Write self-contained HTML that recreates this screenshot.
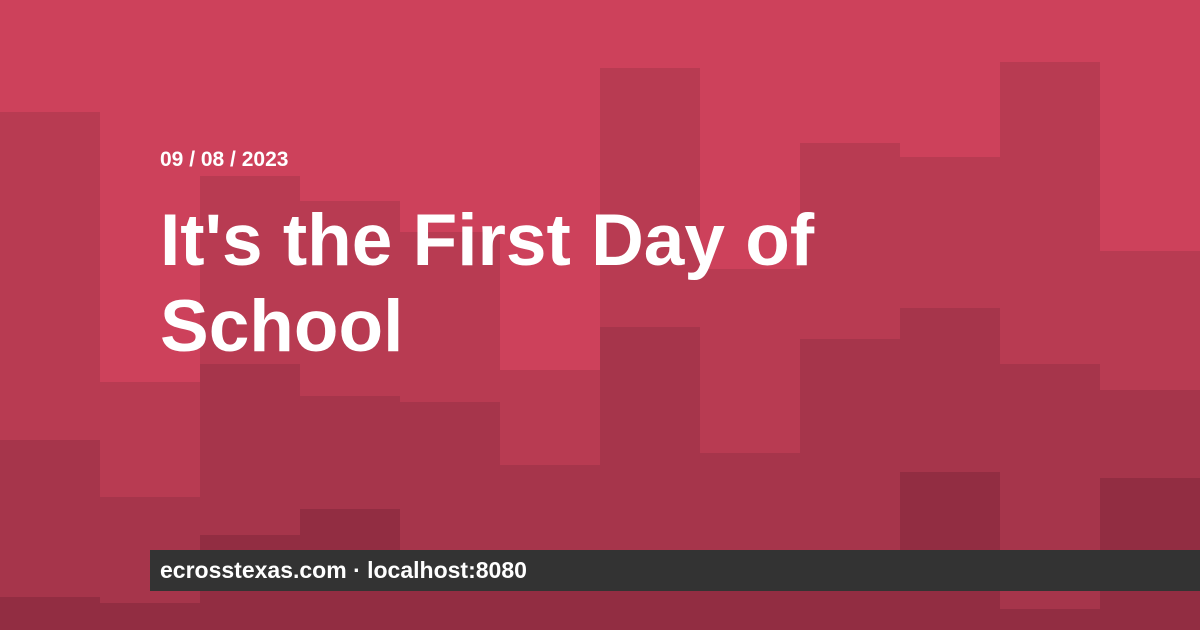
<!DOCTYPE html>
<html><head><meta charset="utf-8"><style>
html,body{margin:0;padding:0}
body{width:1200px;height:630px;position:relative;overflow:hidden;background:#CD415B;font-family:"Liberation Sans",Arial,sans-serif}
.t{position:absolute;color:#fff;font-weight:bold;left:160px;white-space:nowrap}
</style></head><body>
<svg width="1200" height="630" style="position:absolute;left:0;top:0">
<rect x="0" y="112" width="100" height="518" fill="#B83B52"/><rect x="0" y="440" width="100" height="190" fill="#A6354B"/><rect x="0" y="597" width="100" height="33" fill="#922D42"/>
<rect x="100" y="382" width="100" height="248" fill="#B83B52"/><rect x="100" y="497" width="100" height="133" fill="#A6354B"/><rect x="100" y="603" width="100" height="27" fill="#922D42"/>
<rect x="200" y="176" width="100" height="454" fill="#B83B52"/><rect x="200" y="364" width="100" height="266" fill="#A6354B"/><rect x="200" y="535" width="100" height="95" fill="#922D42"/>
<rect x="300" y="201" width="100" height="429" fill="#B83B52"/><rect x="300" y="396" width="100" height="234" fill="#A6354B"/><rect x="300" y="509" width="100" height="121" fill="#922D42"/>
<rect x="400" y="232" width="100" height="398" fill="#B83B52"/><rect x="400" y="402" width="100" height="228" fill="#A6354B"/><rect x="400" y="590" width="100" height="40" fill="#922D42"/>
<rect x="500" y="370" width="100" height="260" fill="#B83B52"/><rect x="500" y="465" width="100" height="165" fill="#A6354B"/><rect x="500" y="590" width="100" height="40" fill="#922D42"/>
<rect x="600" y="68" width="100" height="562" fill="#B83B52"/><rect x="600" y="327" width="100" height="303" fill="#A6354B"/><rect x="600" y="590" width="100" height="40" fill="#922D42"/>
<rect x="700" y="269" width="100" height="361" fill="#B83B52"/><rect x="700" y="453" width="100" height="177" fill="#A6354B"/><rect x="700" y="590" width="100" height="40" fill="#922D42"/>
<rect x="800" y="143" width="100" height="487" fill="#B83B52"/><rect x="800" y="339" width="100" height="291" fill="#A6354B"/><rect x="800" y="590" width="100" height="40" fill="#922D42"/>
<rect x="900" y="157" width="100" height="473" fill="#B83B52"/><rect x="900" y="308" width="100" height="322" fill="#A6354B"/><rect x="900" y="472" width="100" height="158" fill="#922D42"/>
<rect x="1000" y="62" width="100" height="568" fill="#B83B52"/><rect x="1000" y="364" width="100" height="266" fill="#A6354B"/><rect x="1000" y="609" width="100" height="21" fill="#922D42"/>
<rect x="1100" y="251" width="100" height="379" fill="#B83B52"/><rect x="1100" y="390" width="100" height="240" fill="#A6354B"/><rect x="1100" y="478" width="100" height="152" fill="#922D42"/>
<rect x="150" y="550" width="1050" height="41" fill="#333333"/>
</svg>
<div class="t" style="top:147px;font-size:21px;line-height:26px">09 / 08 / 2023</div>
<div class="t" style="top:198px;font-size:73px;line-height:86px">It's the First Day of<br>School</div>
<div class="t" style="top:556px;font-size:23px;line-height:28px">ecrosstexas.com · localhost:8080</div>
</body></html>
